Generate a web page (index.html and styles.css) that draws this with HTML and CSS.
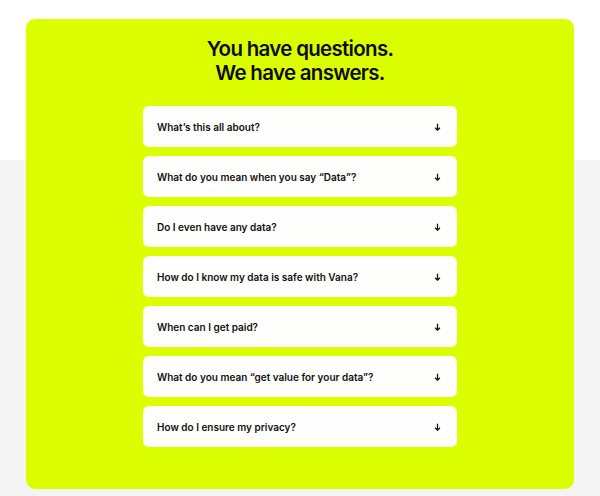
FILE: index.html
```html
<!DOCTYPE html>
<html lang="en">
<head>
<meta charset="utf-8">
<title>FAQ</title>
<link rel="stylesheet" href="styles.css">
</head>
<body>
<main class="page">
  <section class="faq-card">
    <h2 class="faq-title">You have questions.<br>We have answers.</h2>
    <ul class="faq-list">
      <li class="faq-item"><span class="faq-q">What’s this all about?</span><svg class="faq-arrow" viewBox="0 0 8 10" width="8" height="10"><path d="M4 1v8M1 6l3 3 3-3" fill="none" stroke="#111" stroke-width="1.6"/></svg></li>
      <li class="faq-item"><span class="faq-q">What do you mean when you say “Data”?</span><svg class="faq-arrow" viewBox="0 0 8 10" width="8" height="10"><path d="M4 1v8M1 6l3 3 3-3" fill="none" stroke="#111" stroke-width="1.6"/></svg></li>
      <li class="faq-item"><span class="faq-q">Do I even have any data?</span><svg class="faq-arrow" viewBox="0 0 8 10" width="8" height="10"><path d="M4 1v8M1 6l3 3 3-3" fill="none" stroke="#111" stroke-width="1.6"/></svg></li>
      <li class="faq-item"><span class="faq-q">How do I know my data is safe with Vana?</span><svg class="faq-arrow" viewBox="0 0 8 10" width="8" height="10"><path d="M4 1v8M1 6l3 3 3-3" fill="none" stroke="#111" stroke-width="1.6"/></svg></li>
      <li class="faq-item"><span class="faq-q">When can I get paid?</span><svg class="faq-arrow" viewBox="0 0 8 10" width="8" height="10"><path d="M4 1v8M1 6l3 3 3-3" fill="none" stroke="#111" stroke-width="1.6"/></svg></li>
      <li class="faq-item"><span class="faq-q">What do you mean “get value for your data”?</span><svg class="faq-arrow" viewBox="0 0 8 10" width="8" height="10"><path d="M4 1v8M1 6l3 3 3-3" fill="none" stroke="#111" stroke-width="1.6"/></svg></li>
      <li class="faq-item"><span class="faq-q">How do I ensure my privacy?</span><svg class="faq-arrow" viewBox="0 0 8 10" width="8" height="10"><path d="M4 1v8M1 6l3 3 3-3" fill="none" stroke="#111" stroke-width="1.6"/></svg></li>
    </ul>
  </section>
</main>
</body>
</html>
```
FILE: styles.css
```css
html, body {
  margin: 0;
  padding: 0;
}
body {
  width: 600px;
  height: 496px;
  overflow: hidden;
  background: linear-gradient(to bottom, #ffffff 0, #ffffff 160px, #f4f4f5 160px, #f4f4f5 100%);
  font-family: Inter, "Liberation Sans", sans-serif;
  color: #111111;
}
.page {
  padding: 19px 26px 0 26px;
}
.faq-card {
  background: #dcff00;
  border-radius: 9px;
  height: 470px;
  box-sizing: border-box;
  padding-top: 18px;
  display: flex;
  flex-direction: column;
  align-items: center;
}
.faq-title {
  margin: 0;
  font-size: 20.5px;
  line-height: 24px;
  font-weight: 600;
  letter-spacing: -0.7px;
  text-align: center;
  color: #0d0d0d;
}
.faq-list {
  list-style: none;
  margin: 21px 0 0 0;
  padding: 0;
  width: 314px;
  display: flex;
  flex-direction: column;
  gap: 9px;
}
.faq-item {
  height: 41px;
  box-sizing: border-box;
  background: #fefefc;
  border-radius: 6px;
  padding: 0 16px 0 14px;
  display: flex;
  align-items: center;
  justify-content: space-between;
}
.faq-q {
  font-size: 10px;
  font-weight: 600;
  letter-spacing: 0;
  color: #111111;
}
.faq-arrow {
  display: block;
  width: 7px;
  height: 8px;
}
```
